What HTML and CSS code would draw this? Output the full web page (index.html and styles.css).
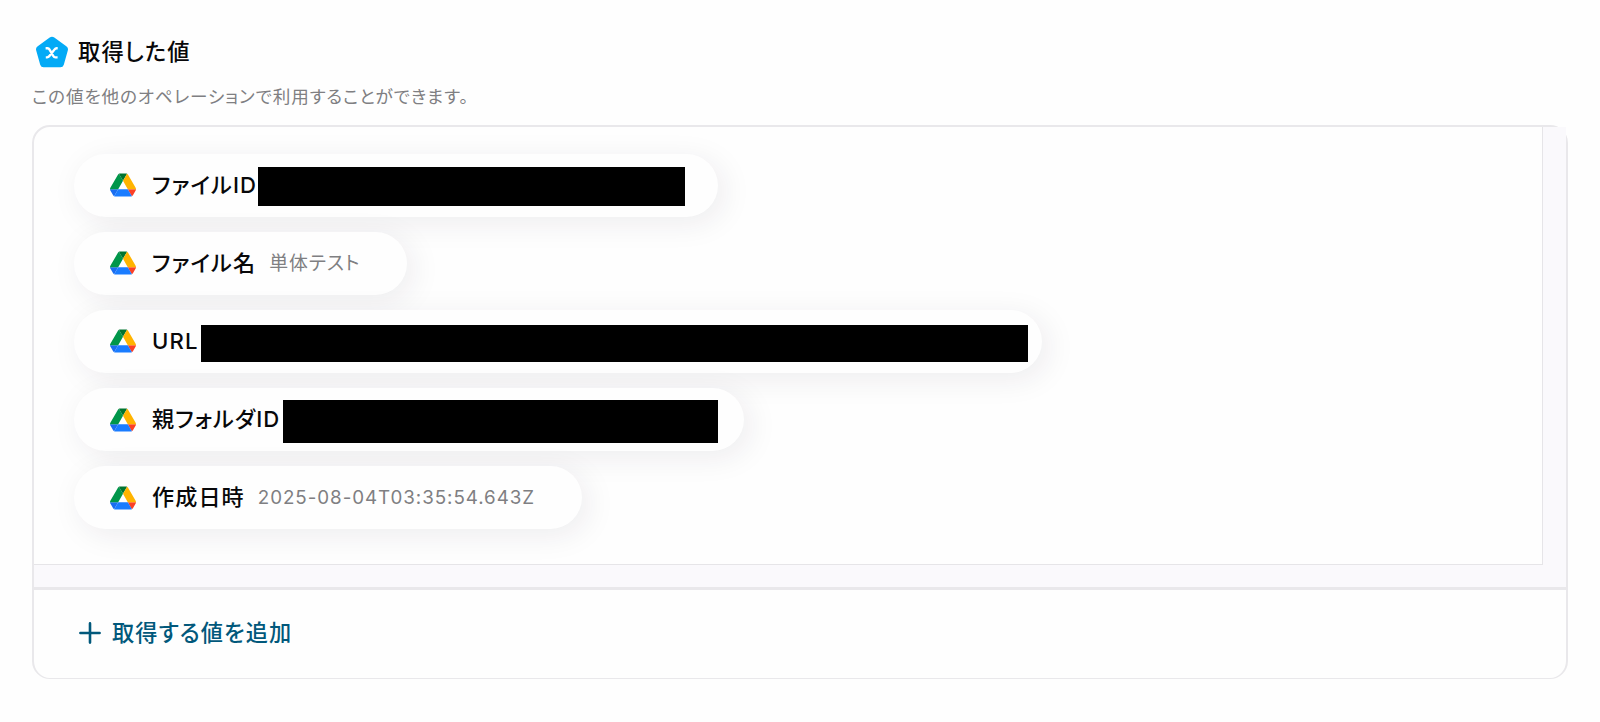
FILE: index.html
```html
<!DOCTYPE html>
<html lang="ja">
<head>
    <meta charset="UTF-8">
    <meta name="viewport" content="width=device-width, initial-scale=1.0">
    <title>取得した値</title>
    <link rel="stylesheet" href="styles.css">
</head>
<body>
    <svg class="defs" width="0" height="0">
        <symbol id="drive" viewBox="0 0 87.3 78">
            <path d="m6.6 66.85 3.85 6.65c.8 1.4 1.95 2.5 3.3 3.3l13.75-23.8h-27.5c0 1.55.4 3.1 1.2 4.5z" fill="#1a6df0"/>
            <path d="m43.65 25-13.75-23.8c-1.35.8-2.5 1.9-3.3 3.3l-25.4 44a9.06 9.06 0 0 0 -1.2 4.5h27.5z" fill="#00964a"/>
            <path d="m73.55 76.8c1.35-.8 2.5-1.9 3.3-3.3l1.6-2.75 7.65-13.25c.8-1.4 1.2-2.95 1.2-4.5h-27.5l5.85 11.5z" fill="#fb4026"/>
            <path d="m43.65 25 13.75-23.8c-1.35-.8-2.9-1.2-4.5-1.2h-18.5c-1.6 0-3.15.45-4.5 1.2z" fill="#007430"/>
            <path d="m59.8 53h-32.3l-13.75 23.8c1.35.8 2.9 1.2 4.5 1.2h50.8c1.6 0 3.15-.45 4.5-1.2z" fill="#1a7cff"/>
            <path d="m73.4 26.5-12.7-22c-.8-1.4-1.95-2.5-3.3-3.3l-13.75 23.8 16.15 28h27.45c0-1.55-.4-3.1-1.2-4.5z" fill="#ffb400"/>
        </symbol>
    </svg>

    <div class="section">
        <div class="section-header">
            <svg class="section-icon" viewBox="0 0 32 32">
                <path d="M13.7 1.6Q16 0 18.3 1.6L30.3 10.2Q32.6 11.9 31.8 14.4L27.8 28.8Q27 31.3 24.4 31.3H7.6Q5 31.3 4.2 28.8L.2 14.4Q-.6 11.9 1.7 10.2Z" fill="#03aaf6"/>
                <path d="M9.6 12.3h1.9c1 0 1.600.5 2.100 1.400l3.700 6.300c.5.9 1.100 1.400 2.100 1.400h2.200M21.700 12.300h-1c-1 0-1.700.5-2.300 1.300l-5 6.500c-.6.8-1.300 1.300-2.300 1.300h-1.300" fill="none" stroke="#fff" stroke-width="2.4"/>
            </svg>
            <h2>取得した値</h2>
        </div>
        <p class="description">この値を他のオペレーションで利用することができます。</p>

        <div class="panel">
            <div class="scroll-area">
                <div class="values">
                    <div class="chip chip-file-id">
                        <svg class="chip-icon"><use href="#drive"/></svg>
                        <span class="chip-label">ファイルID</span>
                        <span class="mask"></span>
                    </div>
                    <div class="chip chip-file-name">
                        <svg class="chip-icon"><use href="#drive"/></svg>
                        <span class="chip-label">ファイル名</span>
                        <span class="chip-value">単体テスト</span>
                    </div>
                    <div class="chip chip-url">
                        <svg class="chip-icon"><use href="#drive"/></svg>
                        <span class="chip-label">URL</span>
                        <span class="mask"></span>
                    </div>
                    <div class="chip chip-folder-id">
                        <svg class="chip-icon"><use href="#drive"/></svg>
                        <span class="chip-label">親フォルダID</span>
                        <span class="mask"></span>
                    </div>
                    <div class="chip chip-created">
                        <svg class="chip-icon"><use href="#drive"/></svg>
                        <span class="chip-label">作成日時</span>
                        <span class="chip-value">2025-08-04T03:35:54.643Z</span>
                    </div>
                </div>
                <div class="track-y"></div>
                <div class="track-x"></div>
            </div>
            <div class="panel-footer">
                <button class="add-btn">
                    <svg class="add-icon" viewBox="0 0 22 22"><path d="M11 1.4v19.2M1.4 11h19.2" stroke="currentColor" stroke-width="2.6" stroke-linecap="round"/></svg>
                    <span>取得する値を追加</span>
                </button>
            </div>
        </div>
    </div>
</body>
</html>
```
FILE: styles.css
```css
* {
    margin: 0;
    padding: 0;
    box-sizing: border-box;
}

body {
    font-family: Inter, 'Noto Sans CJK JP', sans-serif;
    font-feature-settings: "palt";
    background-color: #fefefe;
    color: #08080a;
}

.defs {
    display: block;
}

.section {
    padding: 36px 32px 0;
}

.section-header {
    display: flex;
    align-items: center;
    gap: 10px;
    height: 32px;
    padding-left: 4px;
}

.section-icon {
    width: 32px;
    height: 32px;
}

h2 {
    font-size: 22.3px;
    font-weight: 500;
    line-height: 32px;
    letter-spacing: 0.05em;
}

.description {
    margin-top: 15px;
    height: 28px;
    font-size: 17.6px;
    line-height: 28px;
    letter-spacing: 0.05em;
    color: #7f7f82;
}

.panel {
    margin-top: 14px;
    height: 554px;
    border: 2px solid #e9e8eb;
    border-bottom-width: 1px;
    border-radius: 18px;
}

.scroll-area {
    display: grid;
    grid-template-columns: 1fr 23px;
    grid-template-rows: 438px 22px;
    border-bottom: 3px solid #e9e8eb;
}

.values {
    display: flex;
    flex-direction: column;
    align-items: flex-start;
    gap: 15.6px;
    padding: 27px 40px 0;
    border-right: 1px solid #e6e5e8;
    border-bottom: 1px solid #e6e5e8;
}

.track-y {
    background-color: #faf9fc;
}

.track-x {
    grid-column: 1 / 3;
    background-color: #faf9fc;
}

.chip {
    display: flex;
    align-items: center;
    height: 62.5px;
    padding-left: 36px;
    border-radius: 32px;
    background-color: #fefefe;
    box-shadow: 6px 6px 31px rgba(40, 20, 50, 0.08);
    white-space: nowrap;
}

.chip-icon {
    width: 26px;
    height: 24px;
    margin-right: 16px;
}

.chip-label {
    padding-bottom: 5px;
    font-size: 22.1px;
    font-weight: 500;
    letter-spacing: 0.05em;
}

.chip-value {
    padding-bottom: 3px;
    margin-left: 13px;
    font-size: 18.9px;
    letter-spacing: 0.05em;
    color: #7f7f82;
}

.chip-created .chip-value {
    padding-bottom: 0;
    font-size: 18.8px;
}

.mask {
    margin-left: auto;
    background-color: #000;
}

.chip-file-id {
    width: 644px;
}

.chip-file-id .mask {
    width: 427px;
    height: 39px;
    margin-top: 2px;
    margin-right: 33px;
}

.chip-file-name {
    width: 333px;
}

.chip-url {
    width: 968px;
}

.chip-url .chip-label {
    padding-bottom: 1px;
}

.chip-url .mask {
    width: 827px;
    height: 37px;
    margin-top: 5px;
    margin-right: 14px;
}

.chip-folder-id {
    width: 670px;
}

.chip-folder-id .mask {
    width: 435px;
    height: 43px;
    margin-top: 4px;
    margin-right: 26px;
}

.chip-created {
    width: 508px;
}

.panel-footer {
    display: flex;
    align-items: center;
    height: 88px;
    padding-bottom: 3px;
    padding-left: 45px;
}

.add-btn {
    display: flex;
    align-items: center;
    gap: 11px;
    border: none;
    background: none;
    color: #01587b;
    font: inherit;
    font-feature-settings: inherit;
    font-size: 22.2px;
    font-weight: 500;
    letter-spacing: 0.05em;
    cursor: pointer;
}

.add-btn span {
    padding-bottom: 3px;
}

.add-icon {
    width: 22px;
    height: 22px;
}
```
